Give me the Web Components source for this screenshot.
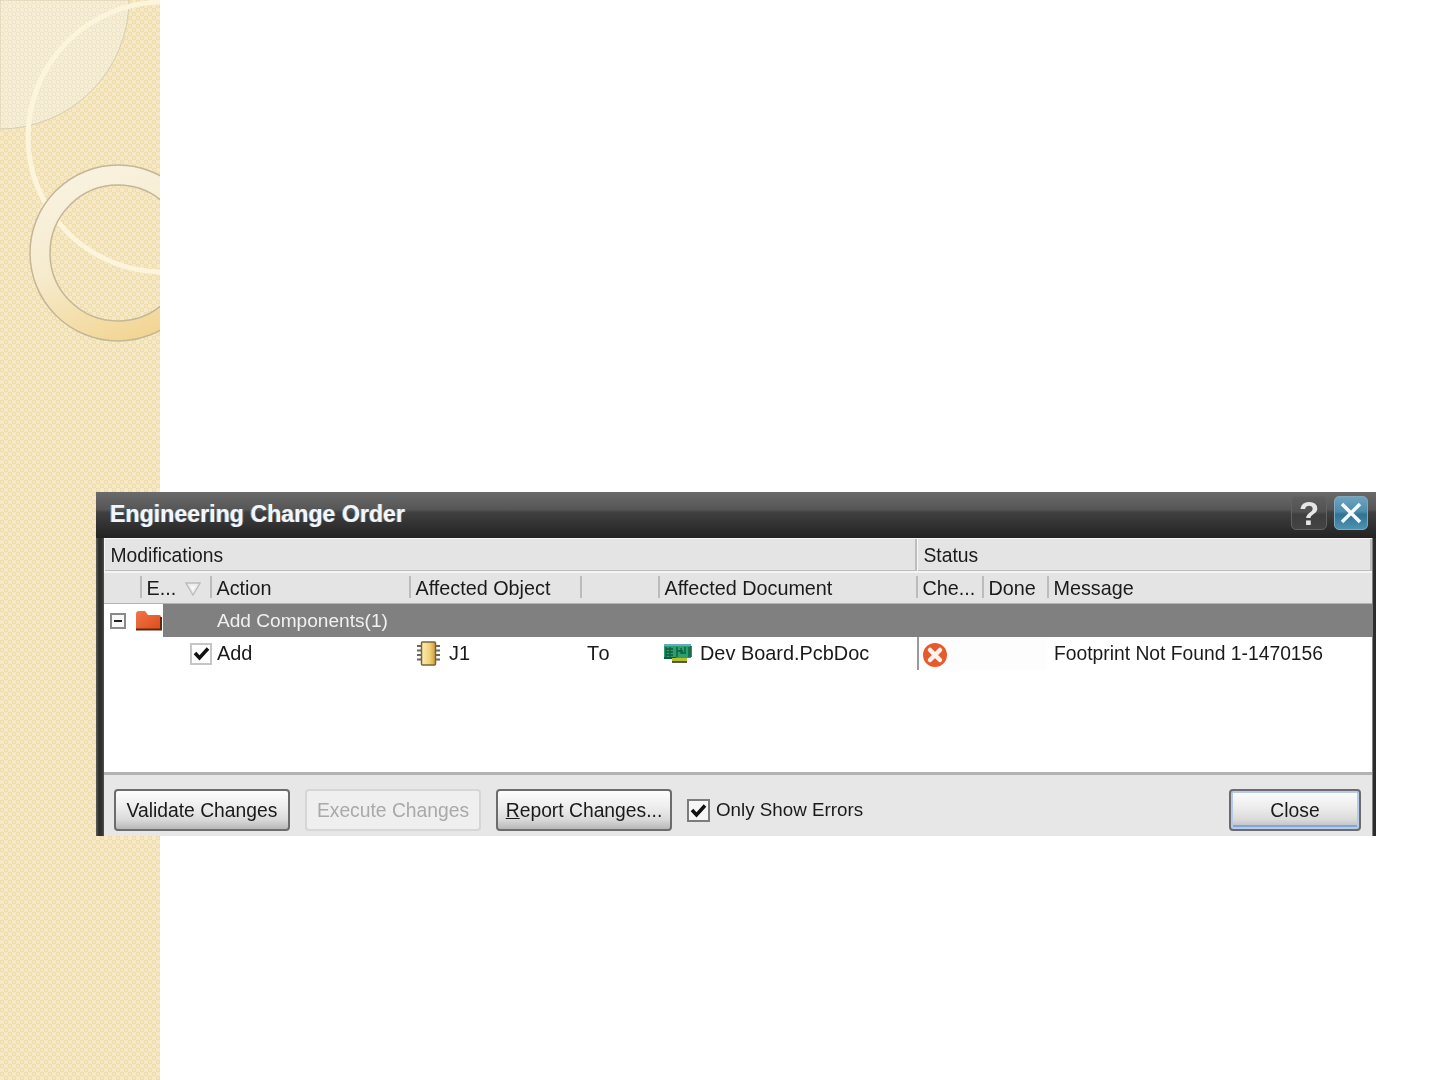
<!DOCTYPE html>
<html lang="en">
<head>
<meta charset="utf-8">
<title>Engineering Change Order</title>
<style>
  html, body { margin: 0; background: #fff; }
</style>
</head>
<body>
<slide-page>
  <eco-window heading="Engineering Change Order">
    <eco-header-groups>
      <span>Modifications</span>
      <span>Status</span>
    </eco-header-groups>
    <eco-columns>
      <span></span>
      <span>E...<sort-arrow></sort-arrow></span>
      <span>Action</span>
      <span>Affected Object</span>
      <span></span>
      <span>Affected Document</span>
      <span>Che...</span>
      <span>Done</span>
      <span>Message</span>
    </eco-columns>
    <eco-group-row>Add Components(1)</eco-group-row>
    <eco-data-row>
      <eco-check slot="enable" variant="grid"></eco-check>
      <span slot="action">Add</span>
      <eco-icon slot="object-icon" name="chip"></eco-icon>
      <span slot="object">J1</span>
      <span slot="to">To</span>
      <eco-icon slot="doc-icon" name="pcb"></eco-icon>
      <span slot="doc">Dev Board.PcbDoc</span>
      <eco-icon slot="check" name="error"></eco-icon>
      <span slot="message">Footprint Not Found 1-1470156</span>
    </eco-data-row>
    <eco-button slot="footer">Validate Changes</eco-button>
    <eco-button slot="footer" disabled>Execute Changes</eco-button>
    <eco-button slot="footer"><u>R</u>eport Changes...</eco-button>
    <eco-check slot="footer" label="Only Show Errors"></eco-check>
    <eco-button slot="footer" primary>Close</eco-button>
  </eco-window>
</slide-page>

<script>
const FONT = '"Liberation Sans", Arial, sans-serif';
const COLUMNS = '36px 70px 199px 171px 78px 258px 66px 65px 1fr';

function define(name, html, setup) {
  const template = document.createElement('template');
  template.innerHTML = html;
  customElements.define(name, class extends HTMLElement {
    connectedCallback() {
      if(this.shadowRoot) return;
      this.attachShadow({ mode: 'open' });
      this.shadowRoot.appendChild(document.importNode(template.content, true));
      if(setup) setup(this, this.shadowRoot);
    }
  });
}

define('slide-page', /* html */ `
  <style>
    :host {
      display: block;
      position: relative;
      width: 1440px;
      height: 1080px;
      overflow: hidden;
      background: #fff;
    }
    svg { display: block; }
  </style>
  <svg width="160" height="1080" viewBox="0 0 160 1080">
    <defs>
      <pattern id="weave" width="8" height="8" patternUnits="userSpaceOnUse">
        <rect width="8" height="8" fill="#f6e9c8"/>
        <rect x="0" y="0" width="4" height="4" fill="#f0ddae"/>
        <rect x="4" y="4" width="4" height="4" fill="#f0ddae"/>
        <rect x="1" y="1" width="2" height="2" fill="#f6e7c0"/>
        <rect x="5" y="5" width="2" height="2" fill="#f6e7c0"/>
      </pattern>
      <pattern id="fine" width="8" height="8" patternUnits="userSpaceOnUse">
        <rect width="8" height="8" fill="#f6edd6"/>
        <rect width="4" height="4" fill="#f1e5c8"/>
        <rect x="4" y="4" width="4" height="4" fill="#f1e5c8"/>
        <rect x="1" y="1" width="2" height="2" fill="#f8f1de"/>
        <rect x="5" y="5" width="2" height="2" fill="#f8f1de"/>
      </pattern>
      <linearGradient id="ring" x1="0.2" y1="0" x2="0.6" y2="1">
        <stop offset="0" stop-color="#f9f3e3"/>
        <stop offset="0.5" stop-color="#f6ebcd"/>
        <stop offset="1" stop-color="#f2d592"/>
      </linearGradient>
    </defs>
    <rect width="160" height="1080" fill="url(#weave)"/>
    <path d="M0 0H129A129 129 0 0 1 0 129Z" fill="url(#fine)" stroke="#d9cdb0" stroke-width="1"/>
    <circle cx="163" cy="137" r="135" fill="none" stroke="#fdf4dc" stroke-width="5"/>
    <path fill-rule="evenodd" fill="url(#ring)" stroke="#c4b696" stroke-width="1.5"
      d="M30 253a88 88 0 1 0 176 0a88 88 0 1 0 -176 0ZM50 253a68 68 0 1 0 136 0a68 68 0 1 0 -136 0Z"/>
  </svg>
  <slot></slot>
`);

define('eco-window', /* html */ `
  <style>
    :host {
      display: flex;
      flex-direction: column;
      position: absolute;
      left: 96px;
      top: 492px;
      width: 1280px;
      height: 344px;
      box-sizing: border-box;
      padding: 0 4px 0 8px;
      background: linear-gradient(90deg, #5a5a5a 0, #2c2c2c 3px, #333 6px, #555 8px, #333 8px) left / 8px 100% no-repeat,
        linear-gradient(90deg, #cfcfcf 0, #2f2f2f 1px, #2a2a2a 100%) right / 4px 100% no-repeat,
        #2a2a2a;
      font: 19.3px/1 ${FONT};
      color: #1a1a1a;
      filter: blur(0.5px);
    }
    .title {
      flex: none;
      height: 46px;
      margin: 0 -4px 0 -8px;
      padding: 0 8px 0 14px;
      display: flex;
      align-items: center;
      gap: 7px;
      background: linear-gradient(#6a6a6a 0, #565656 38%, #404040 44%, #222 100%);
    }
    .title h1 {
      flex: 1;
      margin: 0;
      font: bold 23.2px/1 ${FONT};
      color: #f2f6fa;
      text-shadow: -1px 0 #5f9fd0, 1px 0 #9a6a40;
    }
    .cap {
      width: 36px;
      height: 34px;
      box-sizing: border-box;
      border: 1px solid #626262;
      border-radius: 5px;
      margin-bottom: 4px;
      display: flex;
      align-items: center;
      justify-content: center;
      background: linear-gradient(#5e5e5e, #525252 45%, #3e3e3e 55%, #444);
      color: #e6e6e6;
      font: bold 33px/1 ${FONT};
    }
    .cap.close {
      width: 34px;
      border-color: #7fa9be;
      background: linear-gradient(#6ea5bf, #4d8cab 45%, #2f7394 55%, #4f93b3);
    }
    .body {
      flex: 1;
      min-height: 0;
      background: #fff;
    }
    .footer {
      flex: none;
      height: 64px;
      box-sizing: border-box;
      padding: 14px 11px 5px 10px;
      display: flex;
      align-items: flex-start;
      gap: 15px;
      border-top: 3px solid;
      border-image: linear-gradient(#b4b4b4, #949494 50%, #c8c8c8) 1;
      background: #e7e7e7;
    }
    ::slotted(eco-button[primary]) { margin-left: auto; }
  </style>
  <div class="title">
    <h1></h1>
    <div class="cap">?</div>
    <div class="cap close">
      <svg width="24" height="24" viewBox="0 0 24 24"><path d="M3 3L21 21M21 3L3 21" stroke="#f4fafd" stroke-width="3.500"/></svg>
    </div>
  </div>
  <div class="body"><slot></slot></div>
  <div class="footer"><slot name="footer"></slot></div>
`, (host, root) => {
  root.querySelector('h1').textContent = host.getAttribute('heading');
});

define('eco-header-groups', /* html */ `
  <style>
    :host {
      display: grid;
      grid-template-columns: 813px 1fr;
      height: 33px;
    }
    ::slotted(span) {
      display: flex;
      align-items: center;
      padding: 2px 0 0 6.500px;
      background: #e4e4e4;
      box-shadow: inset 1px 1px 0 #f6f6f6, inset -2px -1px 0 #bdbdbd;
    }
  </style>
  <slot></slot>
`);

define('eco-columns', /* html */ `
  <style>
    :host {
      display: grid;
      grid-template-columns: ${COLUMNS};
      height: 33px;
      background: #e4e4e4;
      border-bottom: 1px solid #b4b4b4;
      box-sizing: border-box;
      box-shadow: inset 0 2px 0 #f4f4f4;
      font-size: 19.8px;
    }
    ::slotted(span) {
      display: flex;
      align-items: center;
      padding: 4px 0 0 6.500px;
      min-width: 0;
      white-space: nowrap;
      background: linear-gradient(#bcbcbc, #bcbcbc) left 5px / 2px 22px no-repeat;
    }
    ::slotted(span:first-child) { background: none; }
  </style>
  <slot></slot>
`);

define('sort-arrow', /* html */ `
  <style>
    :host { display: inline-block; margin-left: 9px; width: 16px; height: 14px; }
    svg { display: block; }
  </style>
  <svg width="16" height="14" viewBox="0 0 16 14">
    <path d="M1 1H15L8 13Z" fill="#ededed" stroke="#bcbcbc" stroke-width="1.4"/>
    <path d="M5 4H11L8 9Z" fill="#f8f8f8"/>
  </svg>
`);

define('eco-group-row', /* html */ `
  <style>
    :host {
      display: flex;
      align-items: center;
      height: 33px;
      background: #fff;
    }
    .box {
      width: 16px;
      height: 16px;
      box-sizing: border-box;
      margin: 0 9px 0 6px;
      border: 2px solid #8a8a8a;
      background: #f8f8f8;
      display: flex;
      align-items: center;
      justify-content: center;
    }
    .box i { width: 8px; height: 2px; background: #222; }
    svg { display: block; flex: none; }
    .bar {
      flex: 1;
      align-self: stretch;
      margin-left: 1px;
      padding-left: 54px;
      display: flex;
      align-items: center;
      background: #808080;
      color: #f0f0f0;
      font-size: 19.1px;
    }
  </style>
  <div class="box"><i></i></div>
  <svg width="27" height="22" viewBox="0 0 27 22">
    <defs>
      <linearGradient id="folder" x1="0" y1="0" x2="1" y2="1">
        <stop offset="0" stop-color="#f0764a"/>
        <stop offset="1" stop-color="#e04a18"/>
      </linearGradient>
    </defs>
    <path d="M1 4Q1 1 4 1H10L13 5H24Q26 5 26 7V20H1Z" fill="url(#folder)"/>
    <path d="M1 19.500H26V7" fill="none" stroke="#5a2a14" stroke-width="2"/>
  </svg>
  <div class="bar"><slot></slot></div>
`);

define('eco-data-row', /* html */ `
  <style>
    :host {
      display: grid;
      grid-template-columns: ${COLUMNS};
      height: 33px;
      background: #fff;
      font-size: 19.9px;
    }
    .cell {
      display: flex;
      align-items: center;
      min-width: 0;
      white-space: nowrap;
    }
    .enable { grid-column: 1 / 3; justify-content: flex-end; margin-right: -2px; }
    .action { padding-left: 7px; }
    .object { padding-left: 8px; gap: 9px; }
    .to { padding-left: 7px; letter-spacing: 1.500px; }
    .doc { padding-left: 5px; gap: 8px; }
    .check {
      grid-column: 7 / 9;
      margin-left: 1px;
      padding: 2px 0 0 4px;
      border-left: 2px solid #9a9a9a;
      background: #fdfdfd;
    }
    .message { padding-left: 7px; font-size: 19.3px; }
  </style>
  <div class="cell enable"><slot name="enable"></slot></div>
  <div class="cell action"><slot name="action"></slot></div>
  <div class="cell object"><slot name="object-icon"></slot><slot name="object"></slot></div>
  <div class="cell to"><slot name="to"></slot></div>
  <div class="cell doc"><slot name="doc-icon"></slot><slot name="doc"></slot></div>
  <div class="cell check"><slot name="check"></slot></div>
  <div class="cell message"><slot name="message"></slot></div>
`);

const ICONS = {
  chip: /* html */ `
    <svg width="23" height="25" viewBox="0 0 23 25">
      <defs>
        <linearGradient id="die" x1="0" y1="0" x2="1" y2="0">
          <stop offset="0" stop-color="#fbeeb4"/>
          <stop offset="0.6" stop-color="#f0cf78"/>
          <stop offset="1" stop-color="#d09a38"/>
        </linearGradient>
      </defs>
      <path d="M0 5H5M0 9.500H5M0 14H5M0 18.500H5M18 5H23M18 9.500H23M18 14H23M18 18.500H23" stroke="#6a675e" stroke-width="2"/>
      <rect x="4.500" y="1" width="14" height="23" rx="1" fill="url(#die)" stroke="#7a6434" stroke-width="1.500"/>
    </svg>`,
  pcb: /* html */ `
    <svg width="29" height="19" viewBox="0 0 29 19">
      <rect x="1" y="1" width="27" height="13" fill="#2aa070"/>
      <rect x="1" y="0" width="27" height="2" fill="#6aa8c4"/>
      <path d="M3 3V13M7 3V13M3 5H10M3 8H10M3 11H10M14 3V13M18 4V9H23M22 3V8M14 7H20M26 3V13" stroke="#125a3e" stroke-width="1.300" fill="none"/>
      <rect x="1" y="13" width="12" height="2" fill="#125a3e"/>
      <rect x="9" y="14" width="15" height="3.500" fill="#b8c020"/>
      <path d="M9 18H24" stroke="#1f2a14" stroke-width="1.500"/>
      <path d="M28 2V13" stroke="#125a3e" stroke-width="1.500"/>
    </svg>`,
  error: /* html */ `
    <svg width="24" height="24" viewBox="0 0 24 24">
      <circle cx="12" cy="12" r="12" fill="#e85a2c"/>
      <path d="M7 7L17 17M17 7L7 17" stroke="#fdf4ee" stroke-width="4.500" stroke-linecap="round"/>
    </svg>`
};

define('eco-icon', /* html */ `
  <style>
    :host { display: block; flex: none; line-height: 0; }
    svg { display: block; }
  </style>
`, (host, root) => {
  let holder = document.createElement('template');
  holder.innerHTML = ICONS[host.getAttribute('name')];
  root.appendChild(holder.content);
});

define('eco-button', /* html */ `
  <style>
    :host {
      display: flex;
      flex: none;
      align-items: center;
      justify-content: center;
      width: 176px;
      height: 42px;
      box-sizing: border-box;
      padding-top: 1px;
      border: 2px solid #6c6c6c;
      border-radius: 4px;
      background: linear-gradient(#fdfdfd 0, #ececec 45%, #dadada 75%, #b8b8b8 100%);
      white-space: nowrap;
    }
    :host([disabled]) {
      border-color: #d6d6d6;
      background: #efefef;
      color: #a9a9a9;
    }
    :host([primary]) {
      width: 132px;
      box-shadow: inset 0 0 0 2px #b6cbea, inset 0 -2px 0 2px #7fa6dc;
    }
  </style>
  <slot></slot>
`);

define('eco-check', /* html */ `
  <style>
    :host {
      display: flex;
      flex: none;
      align-items: center;
      gap: 6px;
      font-size: 18.800px;
    }
    :host([label]) { height: 42px; }
    .box {
      width: 23px;
      height: 23px;
      box-sizing: border-box;
      border: 2px solid #7c7c7c;
      background: #f6f6f6;
      display: flex;
      align-items: center;
      justify-content: center;
    }
    :host([variant="grid"]) .box {
      width: 22px;
      height: 22px;
      border-color: #c6c6c6;
      background: #fff;
      align-items: flex-start;
      padding-top: 1px;
    }
    svg { display: block; }
  </style>
  <div class="box">
    <svg width="17" height="15" viewBox="0 0 17 15"><path d="M2 7L6.500 12L15 2.500" fill="none" stroke="#111" stroke-width="3.500"/></svg>
  </div>
  <span class="label"></span>
`, (host, root) => {
  let label = root.querySelector('.label');
  if(host.hasAttribute('label')) {
    label.textContent = host.getAttribute('label');
  } else {
    label.remove();
  }
});
</script>
</body>
</html>
